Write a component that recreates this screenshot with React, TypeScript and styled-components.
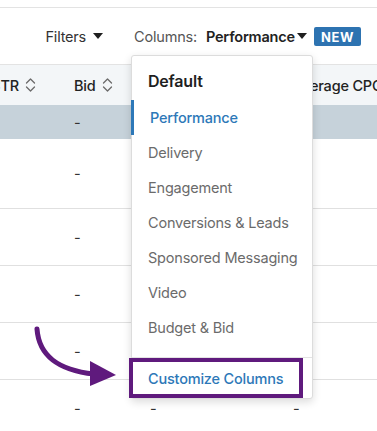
import React from "react";
import styled, { createGlobalStyle } from "styled-components";

const GlobalStyle = createGlobalStyle`
  html, body {
    margin: 0;
    padding: 0;
    background: #ffffff;
    overflow: hidden;
  }
  body {
    font-family: Inter, "Noto Sans", "Liberation Sans", sans-serif;
    color: #1f1f1f;
    letter-spacing: -0.2px;
  }
`;

const Page = styled.div`
  position: relative;
  width: 377px;
  height: 431px;
  overflow: hidden;
  background: #fff;
`;

const TopStrip = styled.div`
  height: 7px;
  border-bottom: 1px solid #e3e3e3;
`;

const Toolbar = styled.div`
  position: relative;
  height: 56px;
  display: flex;
  align-items: center;
  justify-content: flex-end;
  padding-right: 16px;
  font-size: 14.5px;
`;

const ToolbarItem = styled.div<{ $gap?: number }>`
  display: flex;
  align-items: center;
  margin-left: ${(p) => p.$gap ?? 0}px;
  color: #333;
  white-space: nowrap;
`;

const Caret = styled.span<{ $gap?: number }>`
  display: inline-block;
  width: 0;
  height: 0;
  border-left: 5.5px solid transparent;
  border-right: 5.5px solid transparent;
  border-top: 6px solid #1f1f1f;
  margin-left: ${(p) => p.$gap ?? 7}px;
`;

const Label = styled.span`
  color: #555;
`;

const Value = styled.span`
  font-weight: 600;
  color: #222;
  margin-left: 9px;
`;

const NewBadge = styled.span`
  margin-left: 7px;
  background: #2d73b1;
  color: #fff;
  font-size: 13px;
  font-weight: 700;
  letter-spacing: 0.6px;
  padding: 2px 7px 1px;
  border-radius: 2px;
  line-height: 16px;
`;

const Table = styled.div`
  border-top: 1px solid #e3e3e3;
  margin-left: -10px;
`;

const Row = styled.div<{ $height: number; $selected?: boolean; $header?: boolean; $border?: boolean }>`
  display: grid;
  grid-template-columns: 84px 76px 143px 1fr;
  align-items: center;
  height: ${(p) => p.$height}px;
  background: ${(p) => (p.$header ? "#f3f6f8" : p.$selected ? "#c6d2da" : "#fff")};
  border-bottom: ${(p) => (p.$border ? "1px solid #e0e0e0" : "none")};
  box-sizing: border-box;
  font-size: 14.5px;
`;

const HeadCell = styled.div`
  display: flex;
  align-items: center;
  gap: 6px;
  color: #222;
  font-weight: 500;
  white-space: nowrap;
  overflow: hidden;
`;

const Cell = styled.div`
  color: #333;
`;

const Menu = styled.div`
  position: absolute;
  left: 131px;
  top: 55px;
  width: 182px;
  background: #fff;
  border: 1px solid #dcdcdc;
  border-radius: 3px;
  box-shadow: 0 3px 8px rgba(0, 0, 0, 0.14);
  box-sizing: border-box;
  z-index: 5;
`;

const MenuHeading = styled.div`
  font-size: 16px;
  font-weight: 600;
  color: #1f1f1f;
  padding: 14px 0 0 16px;
  height: 44px;
  box-sizing: border-box;
  line-height: 22px;
`;

const MenuItem = styled.div<{ $active?: boolean }>`
  position: relative;
  height: 35px;
  display: flex;
  align-items: center;
  padding-left: ${(p) => (p.$active ? 18 : 16)}px;
  font-size: 14.5px;
  color: ${(p) => (p.$active ? "#2d78b8" : "#6b6b6b")};
  font-weight: ${(p) => (p.$active ? 500 : 400)};
  white-space: nowrap;
  &::before {
    content: "";
    display: ${(p) => (p.$active ? "block" : "none")};
    position: absolute;
    left: -1px;
    top: 0;
    bottom: 0;
    width: 3px;
    background: #2d78b8;
  }
`;

const MenuList = styled.div`
  padding-bottom: 12px;
  border-bottom: 1px solid #e3e3e3;
`;

const CustomizeRow = styled.div`
  position: relative;
  height: 40px;
  display: flex;
  align-items: center;
  padding-left: 16px;
  font-size: 14.5px;
  font-weight: 500;
  color: #2d78b8;
`;

const Highlight = styled.div`
  position: absolute;
  left: -3px;
  top: 0;
  width: 174px;
  height: 40px;
  border: 4px solid #5f1a7d;
  box-sizing: border-box;
`;

const Arrow = styled.svg`
  position: absolute;
  left: 0;
  top: 0;
  z-index: 6;
  pointer-events: none;
`;

const SortIcon = () => (
  <svg width="11" height="16" viewBox="0 0 11 16">
    <path
      d="M1.5 6 L5.5 2 L9.5 6 M1.5 10 L5.5 14 L9.5 10"
      fill="none"
      stroke="#6a6a6a"
      strokeWidth="1.3"
      strokeLinecap="round"
      strokeLinejoin="round"
    />
  </svg>
);

const rows = [
  { h: 34, selected: true, border: false, cells: ["", "-", "", ""] },
  { h: 70, border: true, cells: ["", "-", "", ""] },
  { h: 57, border: true, cells: ["", "-", "", ""] },
  { h: 57, border: true, cells: ["", "-", "", ""] },
  { h: 57, border: true, cells: ["", "-", "", ""] },
  { h: 57, border: false, cells: ["", "-", "-", "-"] },
];

const menuItems = [
  "Performance",
  "Delivery",
  "Engagement",
  "Conversions & Leads",
  "Sponsored Messaging",
  "Video",
  "Budget & Bid",
];

export default function App() {
  return (
    <Page>
      <GlobalStyle />
      <TopStrip />
      <Toolbar>
        <ToolbarItem>
          <span>Filters</span>
          <Caret />
        </ToolbarItem>
        <ToolbarItem $gap={31}>
          <Label>Columns:</Label>
          <Value>Performance</Value>
          <Caret $gap={2} />
          <NewBadge>NEW</NewBadge>
        </ToolbarItem>
      </Toolbar>

      <Table>
        <Row $height={40} $header>
          <HeadCell>
            CTR <SortIcon />
          </HeadCell>
          <HeadCell>
            Bid <SortIcon />
          </HeadCell>
          <HeadCell />
          <HeadCell>Average CPC</HeadCell>
        </Row>
        {rows.map((r, i) => (
          <Row key={i} $height={r.h} $selected={r.selected} $border={r.border}>
            {r.cells.map((c, j) => (
              <Cell key={j}>{c}</Cell>
            ))}
          </Row>
        ))}
      </Table>

      <Menu>
        <MenuHeading>Default</MenuHeading>
        <MenuList>
          {menuItems.map((m, i) => (
            <MenuItem key={m} $active={i === 0}>
              {m}
            </MenuItem>
          ))}
        </MenuList>
        <CustomizeRow>
          <Highlight />
          Customize Columns
        </CustomizeRow>
      </Menu>

      <Arrow width="377" height="431" viewBox="0 0 377 431">
        <path
          d="M37 329 C 39 356, 58 370, 94 374"
          fill="none"
          stroke="#5f1a7d"
          strokeWidth="5"
          strokeLinecap="round"
        />
        <polygon points="90,361 116,375 90,386" fill="#5f1a7d" />
      </Arrow>
    </Page>
  );
}
